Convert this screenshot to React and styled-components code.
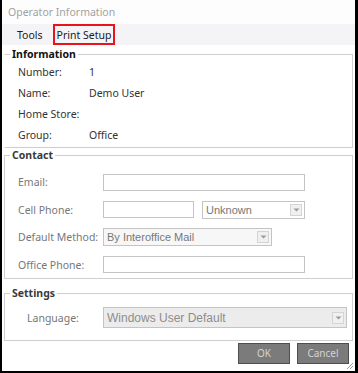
import React from "react";
import styled, { createGlobalStyle } from "styled-components";

const GlobalStyle = createGlobalStyle`
  html, body {
    margin: 0;
    padding: 0;
    background: #000;
  }
  body {
    font-family: "Noto Sans", "Liberation Sans", sans-serif;
  }
`;

const App = () => {
  return (
    <>
      <GlobalStyle />
      <Window>
        <TitleBar>Operator Information</TitleBar>
        <MenuBar>
          <MenuItem>Tools</MenuItem>
          <MenuItem highlighted>Print Setup</MenuItem>
        </MenuBar>

        <Group noLeft>
          <Legend>Information</Legend>
          <InfoRow>
            <InfoLabel>Number:</InfoLabel>
            <span>1</span>
          </InfoRow>
          <InfoRow>
            <InfoLabel>Name:</InfoLabel>
            <span>Demo User</span>
          </InfoRow>
          <InfoRow>
            <InfoLabel>Home Store:</InfoLabel>
            <span />
          </InfoRow>
          <InfoRow>
            <InfoLabel>Group:</InfoLabel>
            <span>Office</span>
          </InfoRow>
        </Group>

        <Group top={1} padTop={9}>
          <Legend light>Contact</Legend>
          <FormGrid>
            <FieldRow>
              <FieldLabel>Email:</FieldLabel>
              <TextBox width={202} />
            </FieldRow>
            <FieldRow>
              <FieldLabel>Cell Phone:</FieldLabel>
              <TextBox width={91} />
              <Combo width={103} style={{ marginLeft: 8 }}>
                <ComboText>Unknown</ComboText>
                <Arrow />
              </Combo>
            </FieldRow>
            <FieldRow>
              <FieldLabel>Default Method:</FieldLabel>
              <Combo width={169} shaded>
                <ComboText>By Interoffice Mail</ComboText>
                <Arrow />
              </Combo>
            </FieldRow>
            <FieldRow>
              <FieldLabel>Office Phone:</FieldLabel>
              <TextBox width={202} />
            </FieldRow>
          </FormGrid>
        </Group>

        <Group top={8} padTop={7} padBottom={11}>
          <Legend light>Settings</Legend>
          <FieldRow>
            <FieldLabel indent={9}>Language:</FieldLabel>
            <Combo width={244} height={21} disabled>
              <ComboText>Windows User Default</ComboText>
              <Arrow />
            </Combo>
          </FieldRow>
        </Group>

        <ButtonBar>
          <DialogButton>OK</DialogButton>
          <DialogButton>Cancel</DialogButton>
        </ButtonBar>

        <Grip width="8" height="8" viewBox="0 0 8 8">
          <path d="M7 1 L1 7 M7 4 L4 7" stroke="#9a9a9a" strokeWidth="1" />
        </Grip>
      </Window>
    </>
  );
};

const Arrow = () => (
  <ArrowBox>
    <svg width="7" height="4" viewBox="0 0 7 4">
      <path d="M0.5 0.5 L6.5 0.5 L3.5 3.5 Z" fill="#9a9a9a" />
    </svg>
  </ArrowBox>
);

const Window = styled.div`
  position: relative;
  width: 353px;
  height: 371px;
  margin-left: 2px;
  background: #fff;
  display: flex;
  flex-direction: column;
  font-size: 10.5px;
  color: #222;
`;

const TitleBar = styled.div`
  height: 24px;
  display: flex;
  align-items: center;
  padding-left: 6px;
  background: #fdfdfd;
  color: #a2a2a2;
  font-size: 10.5px;
`;

const MenuBar = styled.div`
  height: 21px;
  display: flex;
  align-items: stretch;
  padding-left: 8px;
  background: #f4f4f6;
`;

const MenuItem = styled.div`
  display: flex;
  align-items: center;
  padding: 0 ${(p) => (p.highlighted ? 2 : 5)}px;
  margin-right: ${(p) => (p.highlighted ? 0 : 3)}px;
  color: #1a1a1a;
  box-sizing: border-box;
  border: 2px solid ${(p) => (p.highlighted ? "#e8141c" : "transparent")};
`;

const Group = styled.fieldset`
  margin: ${(p) => p.top || 3}px 2px 0 2px;
  padding: ${(p) => p.padTop || 0}px 0 ${(p) => p.padBottom || 2}px 0;
  border: 1px solid #cfcfcf;
  border-left-color: ${(p) => (p.noLeft ? "transparent" : "#cfcfcf")};
  min-width: 0;
`;

const Legend = styled.legend`
  margin-left: 5px;
  padding: 0 2px;
  font-weight: bold;
  font-size: 10.5px;
  line-height: 13px;
  color: ${(p) => (p.light ? "#3a3a3a" : "#111")};
`;

const InfoRow = styled.div`
  height: 21px;
  display: flex;
  align-items: center;
  padding-left: 13px;
  color: #333;
`;

const InfoLabel = styled.span`
  width: 71px;
`;

const FormGrid = styled.div`
  display: flex;
  flex-direction: column;
  gap: 5.5px;
`;

const FieldRow = styled.div`
  height: 22px;
  display: flex;
  align-items: center;
`;

const FieldLabel = styled.span`
  box-sizing: border-box;
  width: 85px;
  padding-left: ${(p) => p.indent || 0}px;
  margin-left: 13px;
  color: #777;
`;

const TextBox = styled.div`
  width: ${(p) => p.width}px;
  height: 17px;
  box-sizing: border-box;
  border: 1px solid #c4c4c4;
  background: #fff;
`;

const Combo = styled.div`
  width: ${(p) => p.width}px;
  height: ${(p) => p.height || 18}px;
  box-sizing: border-box;
  display: flex;
  align-items: center;
  border: 1px solid #c4c4c4;
  background: ${(p) => (p.disabled ? "#ececec" : p.shaded ? "#f7f7f7" : "#fff")};
  color: ${(p) => (p.disabled ? "#8c8c8c" : "#777")};
  font-family: "Liberation Sans", Arial, sans-serif;
  font-size: ${(p) => (p.disabled ? 12 : 11)}px;
`;

const ComboText = styled.span`
  flex: 1;
  padding-left: 3px;
  white-space: nowrap;
`;

const ArrowBox = styled.div`
  width: 12px;
  height: 12px;
  margin-right: 2px;
  box-sizing: border-box;
  border: 1px solid #d4d4d4;
  background: #f0f0f0;
  display: flex;
  align-items: center;
  justify-content: center;
`;

const ButtonBar = styled.div`
  display: flex;
  justify-content: flex-end;
  gap: 7px;
  margin-top: 2px;
  padding-right: 6px;
`;

const DialogButton = styled.div`
  width: 52px;
  height: 21px;
  box-sizing: border-box;
  display: flex;
  align-items: center;
  justify-content: center;
  background: #7b7b7b;
  border: 1px solid #4e4e4e;
  color: #d4d4d4;
  font-size: 10px;
`;

const Grip = styled.svg`
  position: absolute;
  right: 1px;
  bottom: 1px;
`;

export default App;
